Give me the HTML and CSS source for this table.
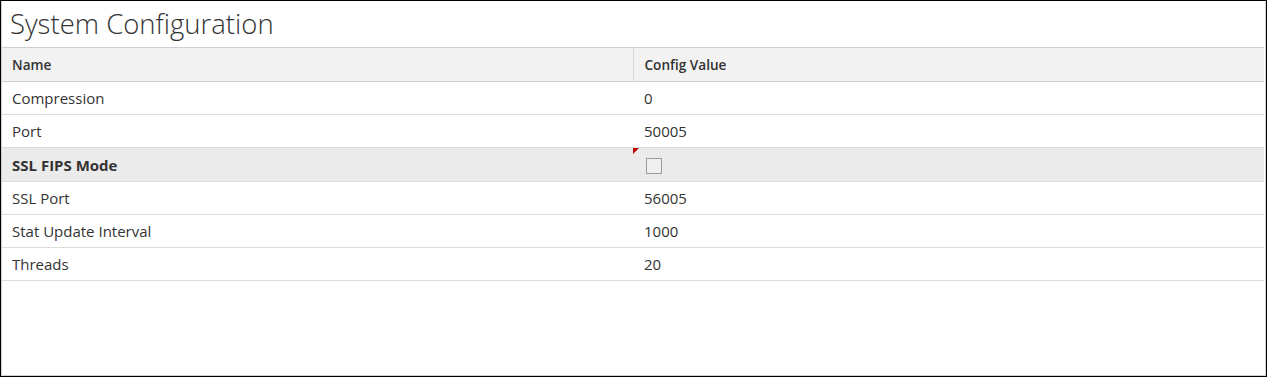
FILE: index.html
```html
<!DOCTYPE html>
<html>
<head>
<meta charset="utf-8">
<link rel="stylesheet" href="styles.css">
</head>
<body>
<div class="frame">
  <div class="panel">
    <h1 class="title">System Configuration</h1>
    <table class="grid">
      <thead>
        <tr><th class="c-name">Name</th><th class="c-val">Config Value</th></tr>
      </thead>
      <tbody>
        <tr><td>Compression</td><td class="v">0</td></tr>
        <tr><td>Port</td><td class="v">50005</td></tr>
        <tr class="sel"><td class="bold">SSL FIPS Mode</td><td class="v dirty"><span class="flag"></span><span class="check"></span></td></tr>
        <tr><td>SSL Port</td><td class="v">56005</td></tr>
        <tr><td>Stat Update Interval</td><td class="v">1000</td></tr>
        <tr><td>Threads</td><td class="v">20</td></tr>
      </tbody>
    </table>
  </div>
</div>
</body>
</html>
```
FILE: styles.css
```css
html, body { margin: 0; padding: 0; background: #fff; }
body { font-family: "Open Sans", "Liberation Sans", sans-serif; color: #333; }
.frame {
  width: 1267px; height: 377px; box-sizing: border-box;
  border: 1px solid #000;
  display: flex;
}
.panel {
  flex: 1;
  border: 1px solid #d0d0d0; border-top: none;
}
.title {
  margin: 0; height: 46px; box-sizing: border-box;
  padding: 4px 0 0 8px;
  font-weight: 300; font-size: 27.5px; line-height: 38px; color: #333;
}
.grid { width: 1262px; border-collapse: collapse; table-layout: fixed; }
.grid th {
  background: #f2f2f2; text-align: left;
  font-size: 13.6px; font-weight: 600; color: #333;
  height: 34px; padding: 0 10px; box-sizing: border-box;
  border-top: 1px solid #cfcfcf; border-bottom: 1px solid #cfcfcf;
}
.grid th.c-name { width: 631px; border-right: 1px solid #d9d9d9; }
.grid th.c-val { padding-left: 11px; }
.grid td {
  font-size: 15px; height: 33px; padding: 0 10px; box-sizing: border-box;
  border-bottom: 1px solid #dcdcdc; color: #333;
}
.grid td.v { padding-left: 11px; }
.grid tr.sel td { background: #ebebeb; height: 34px; }
.grid td.bold { font-weight: 700; }
.grid td.dirty { position: relative; }
.flag {
  position: absolute; left: 0; top: 0; width: 0; height: 0;
  border-top: 6px solid #c00000; border-right: 6px solid transparent;
}
.check {
  display: inline-block; width: 14px; height: 14px; vertical-align: middle;
  border: 1px solid #9a9a9a; background: #efefef; margin-left: 2px;
}
```
